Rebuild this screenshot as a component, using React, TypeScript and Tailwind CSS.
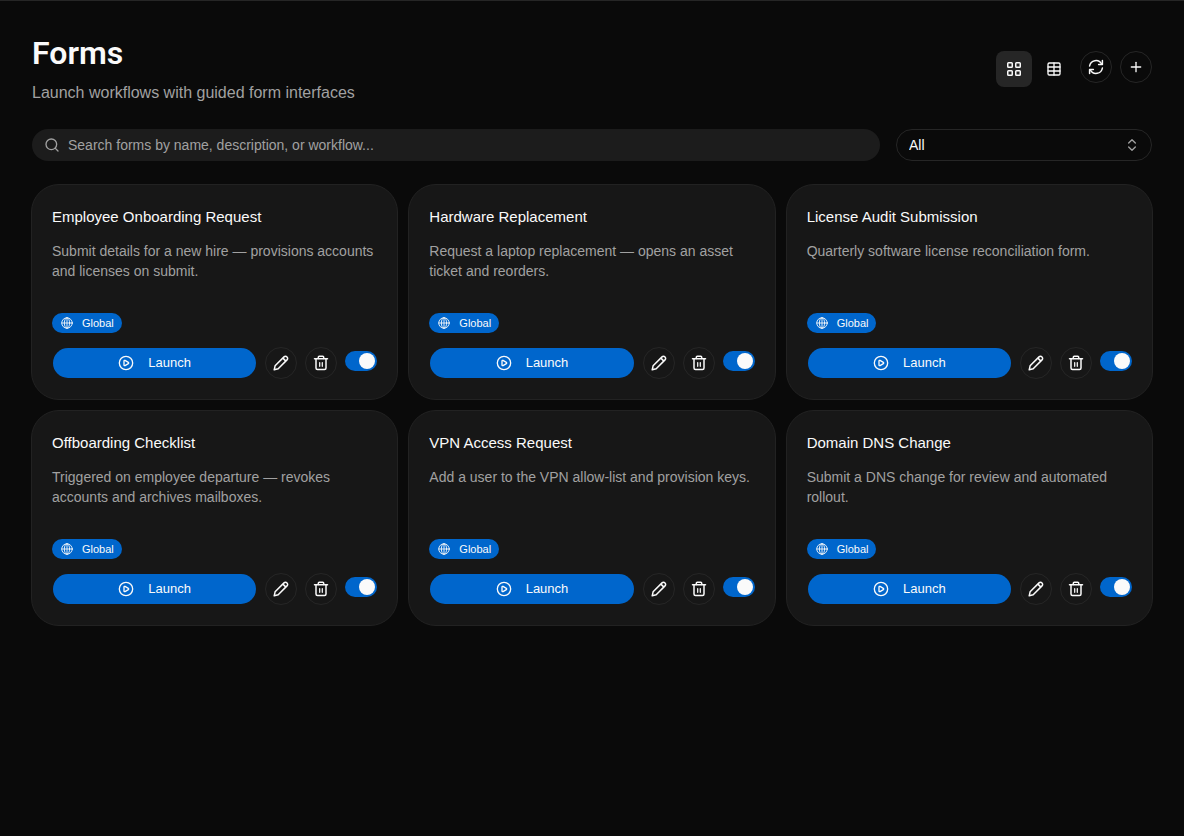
import type { ReactNode } from "react";
import { ChevronsUpDown, CirclePlay, Plus, Search, Table } from "lucide-react";

const forms = [
    {
        name: "Employee Onboarding Request",
        description: "Submit details for a new hire — provisions accounts and licenses on submit.",
    },
    {
        name: "Hardware Replacement",
        description: "Request a laptop replacement — opens an asset ticket and reorders.",
    },
    {
        name: "License Audit Submission",
        description: "Quarterly software license reconciliation form.",
    },
    {
        name: "Offboarding Checklist",
        description: "Triggered on employee departure — revokes accounts and archives mailboxes.",
    },
    {
        name: "VPN Access Request",
        description: "Add a user to the VPN allow-list and provision keys.",
    },
    {
        name: "Domain DNS Change",
        description: "Submit a DNS change for review and automated rollout.",
    },
];

const roundButton =
    "flex size-8 shrink-0 items-center justify-center rounded-full border border-[#262626] text-[#fafafa] hover:bg-[#262626]";

function Icon({ className = "size-4", children }: { className?: string; children: ReactNode }) {
    return (
        <svg
            viewBox="0 0 16 16"
            fill="none"
            stroke="currentColor"
            strokeWidth="1.5"
            strokeLinecap="round"
            strokeLinejoin="round"
            aria-hidden="true"
            className={className}
        >
            {children}
        </svg>
    );
}

function GridIcon() {
    return (
        <Icon>
            <rect x="1.75" y="1.75" width="4.5" height="4.5" rx="0.75" />
            <rect x="9.75" y="1.75" width="4.5" height="4.5" rx="0.75" />
            <rect x="1.75" y="9.75" width="4.5" height="4.5" rx="0.75" />
            <rect x="9.75" y="9.75" width="4.5" height="4.5" rx="0.75" />
        </Icon>
    );
}

function RefreshIcon() {
    return (
        <Icon>
            <path d="M1.6 7A6.4 6.4 0 0 1 13.6 5" />
            <path d="M14.4 1.6v3.8h-3.8" />
            <path d="M14.4 9A6.4 6.4 0 0 1 2.4 11" />
            <path d="M1.6 14.4v-3.8h3.8" />
        </Icon>
    );
}

function PencilIcon() {
    return (
        <Icon>
            <path d="M1.2 14.8l.9-4 8.9-8.9a2.1 2.1 0 0 1 3 0 2.1 2.1 0 0 1 0 3l-8.8 8.9z" />
            <path d="M10.4 3.6l2 2" />
        </Icon>
    );
}

function TrashIcon() {
    return (
        <Icon>
            <path d="M1.5 3.8h13" />
            <path d="M5.3 3.6V2.2a1 1 0 0 1 1-1h3.4a1 1 0 0 1 1 1v1.4" />
            <path d="M3 4v9a1.5 1.5 0 0 0 1.5 1.5h7A1.5 1.5 0 0 0 13 13V4" />
            <path d="M6.7 7.5v3.8M9.3 7.5v3.8" strokeWidth="1.25" />
        </Icon>
    );
}

function GlobeIcon() {
    return (
        <Icon className="size-3.5">
            <g strokeWidth="1">
                <circle cx="8" cy="8" r="6" />
                <ellipse cx="8" cy="8" rx="3" ry="6" />
                <path d="M2 8h12M8 2v12" />
            </g>
        </Icon>
    );
}

function FormCard({ name, description }: { name: string; description: string }) {
    return (
        <article className="flex flex-col rounded-[28px] border border-[#222222] bg-[#171717] p-5">
            <h2 className="text-[15px] leading-6 text-[#fafafa]">{name}</h2>
            <p className="mt-3 min-h-16 text-sm leading-5 text-[#a1a1a1]">{description}</p>
            <div className="mt-2 flex">
                <span className="flex h-5 items-center gap-2 rounded-full bg-[#0066cc] px-2 text-[11px] text-[#fafafa]">
                    <GlobeIcon />
                    Global
                </span>
            </div>
            <div className="mt-3.5 flex items-center gap-2">
                <button className="flex h-8 flex-1 items-center justify-center gap-3.5 rounded-full border border-transparent bg-[#0066cc] bg-clip-padding text-[13px] text-[#fafafa]">
                    <CirclePlay className="size-4" />
                    Launch
                </button>
                <button className={roundButton} aria-label={`Edit ${name}`}>
                    <PencilIcon />
                </button>
                <button className={roundButton} aria-label={`Delete ${name}`}>
                    <TrashIcon />
                </button>
                <label className="mb-1 flex h-5 w-8 cursor-pointer items-center rounded-full bg-[#404040] px-0.5 has-checked:justify-end has-checked:bg-[#0066cc]">
                    <input type="checkbox" defaultChecked className="sr-only" aria-label={`Enable ${name}`} />
                    <span className="size-4 rounded-full bg-[#fafafa]" />
                </label>
            </div>
        </article>
    );
}

export default function App() {
    return (
        <main className="min-h-screen border-t border-[#262626] bg-[#0a0a0a] px-8 pt-8 font-['Liberation_Sans',Arial,sans-serif] text-[#fafafa]">
            {/* Header */}
            <header className="flex items-center justify-between">
                <div>
                    <h1 className="font-[Roboto,sans-serif] text-[32px] leading-10 font-semibold">Forms</h1>
                    <p className="mt-2 text-base leading-6 text-[#a1a1a1]">Launch workflows with guided form interfaces</p>
                </div>
                <div className="flex items-start">
                    <button aria-label="Grid view" className="flex size-9 items-center justify-center rounded-lg bg-[#262626]">
                        <GridIcon />
                    </button>
                    <button aria-label="Table view" className="ml-1 flex size-9 items-center justify-center rounded-lg">
                        <Table className="size-4" />
                    </button>
                    <button aria-label="Refresh" className={`ml-2 ${roundButton}`}>
                        <RefreshIcon />
                    </button>
                    <button aria-label="New form" className={`ml-2 ${roundButton}`}>
                        <Plus className="size-4" />
                    </button>
                </div>
            </header>

            {/* Filters */}
            <div className="mt-6 flex gap-4">
                <label className="flex h-8 flex-1 items-center gap-2 rounded-full bg-[#1c1c1c] px-3 text-[#a1a1a1]">
                    <Search className="size-4" />
                    <input
                        type="search"
                        aria-label="Search forms"
                        placeholder="Search forms by name, description, or workflow..."
                        className="min-w-0 flex-1 bg-transparent text-sm outline-none placeholder:text-[#a1a1a1]"
                    />
                </label>
                <div className="relative w-64">
                    <select
                        aria-label="Filter forms"
                        className="h-8 w-full appearance-none rounded-full border border-[#262626] bg-[#0a0a0a] px-3 text-sm"
                    >
                        <option>All</option>
                    </select>
                    <ChevronsUpDown className="pointer-events-none absolute top-2 right-3 size-4 text-[#a1a1a1]" />
                </div>
            </div>

            {/* Cards */}
            <section className="-mx-px mt-[23px] grid grid-cols-3 gap-2.5">
                {forms.map((form) => (
                    <FormCard key={form.name} {...form} />
                ))}
            </section>
        </main>
    );
}
